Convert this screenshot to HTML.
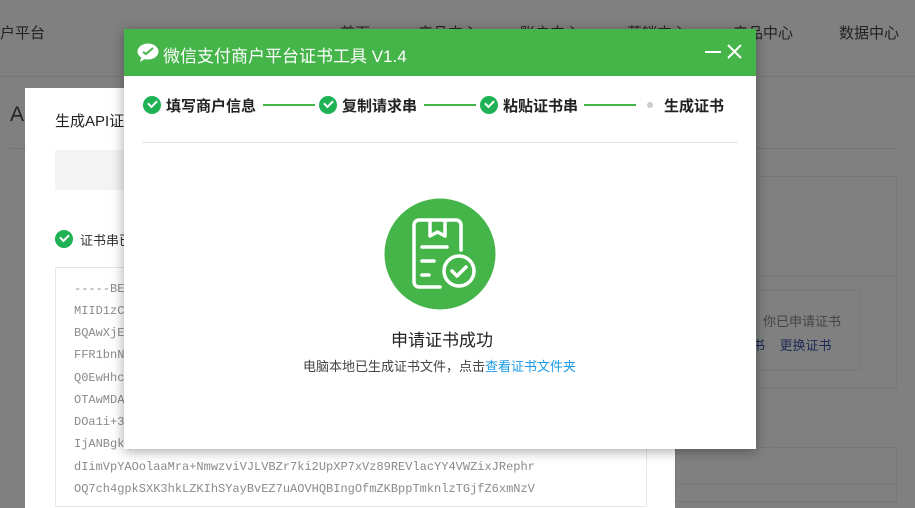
<!DOCTYPE html>
<html style="background:#808080"><head><meta charset="utf-8"><style>
*{margin:0;padding:0;box-sizing:border-box}
body{width:915px;height:500px;overflow:hidden;background:#808080;position:relative;font-family:"Liberation Sans","Noto Sans CJK SC",sans-serif}
.a{position:absolute;white-space:nowrap}
.nav{font-size:15px;color:#222;top:22px}
.code{font-family:"Liberation Mono",monospace;font-size:12px;color:#8a8a8a;left:74px}
.step{font-size:15px;color:#222;font-weight:bold;top:95px}
.ck{position:absolute;width:18px;height:18px;border-radius:50%;background:#1fb254;top:96px}
.ck:after{content:"";position:absolute;left:5px;top:4px;width:7px;height:4px;border-left:2px solid #fff;border-bottom:2px solid #fff;transform:rotate(-45deg)}
.ln{position:absolute;height:2px;background:#45b549;top:104px}
</style></head><body>
<div class="a" style="left:0;top:0;width:915px;height:500px;background:#808080"></div>
<div class="a nav" style="left:0">户平台</div>
<div class="a nav" style="left:340px">首页</div>
<div class="a nav" style="left:418px">产品中心</div>
<div class="a nav" style="left:520px">账户中心</div>
<div class="a nav" style="left:627px">营销中心</div>
<div class="a nav" style="left:733px">产品中心</div>
<div class="a nav" style="left:839px">数据中心</div>
<div class="a" style="left:0;top:76px;width:915px;height:1px;background:#777"></div>
<div class="a" style="left:10px;top:103px;font-size:21px;color:#222">AI</div>
<div class="a" style="left:10px;top:148px;width:887px;height:1px;background:#747474"></div>
<div class="a" style="left:675px;top:176px;width:222px;height:100px;border:1px solid #787878"></div>
<div class="a" style="left:675px;top:290px;width:186px;height:81px;border:1px solid #787878;border-radius:3px"></div>
<div class="a" style="left:675px;top:213px;width:222px;height:175px;border:1px solid #787878;border-top:none"></div>
<div class="a" style="left:763px;top:311px;font-size:13px;color:#444">你已申请证书</div>
<div class="a" style="left:752px;top:335px;font-size:13px;color:#1d2a55">书 &nbsp;&nbsp;&nbsp;更换证书</div>
<div class="a" style="left:675px;top:447px;width:222px;height:55px;border:1px solid #787878"></div>
<div class="a" style="left:675px;top:484px;width:222px;height:20px;border-top:1px solid #787878"></div>
<div class="a" style="left:25px;top:88px;width:650px;height:420px;background:#fff"></div>
<div class="a" style="left:55px;top:110px;font-size:15px;color:#222">生成API证</div>
<div class="a" style="left:55px;top:150px;width:600px;height:40px;background:#f3f3f3"></div>
<div class="ck" style="left:55px;top:230px"></div>
<div class="a" style="left:80px;top:230px;font-size:13px;color:#333">证书串已</div>
<div class="a" style="left:55px;top:267px;width:592px;height:240px;border:1px solid #e6e6e6"></div>
<div class="a code" style="top:282px">-----BEGIN</div>
<div class="a code" style="top:304px">MIID1zCCAr</div>
<div class="a code" style="top:326px">BQAwXjELMA</div>
<div class="a code" style="top:348px">FFR1bnNlbn</div>
<div class="a code" style="top:371px">Q0EwHhcNMT</div>
<div class="a code" style="top:393px">OTAwMDAxMT</div>
<div class="a code" style="top:415px">DOa1i+3kAl</div>
<div class="a code" style="top:437px">IjANBgkqhk</div>
<div class="a code" style="top:460px">dIimVpYAOolaaMra+NmwzviVJLVBZr7ki2UpXP7xVz89REVlacYY4VWZixJRephr</div>
<div class="a code" style="top:482px">OQ7ch4gpkSXK3hkLZKIhSYayBvEZ7uAOVHQBIngOfmZKBppTmknlzTGjfZ6xmNzV</div>
<div class="a" style="left:124px;top:29px;width:632px;height:420px;background:#fff;box-shadow:0 2px 12px rgba(0,0,0,.35)"></div>
<div class="a" style="left:124px;top:29px;width:632px;height:47px;background:#45b549"></div>
<svg class="a" style="left:137px;top:43px" width="22" height="19" viewBox="0 0 22 19"><ellipse cx="11" cy="8.5" rx="10.5" ry="8" fill="#fff"/><path d="M4 15 L3 19 L8 16Z" fill="#fff"/><path d="M6 9 L9 11 L16 5" stroke="#45b549" stroke-width="2" fill="none"/></svg>
<div class="a" style="left:163px;top:42px;font-size:17px;color:#fff">微信支付商户平台证书工具 V1.4</div>
<div class="a" style="left:705px;top:51px;width:16px;height:2px;background:#fff"></div>
<svg class="a" style="left:727px;top:44px" width="15" height="15"><path d="M1 1L14 14M14 1L1 14" stroke="#fff" stroke-width="2"/></svg>
<div class="ck" style="left:143px"></div><div class="a step" style="left:166px">填写商户信息</div>
<div class="ln" style="left:263px;width:52px"></div>
<div class="ck" style="left:319px"></div><div class="a step" style="left:342px">复制请求串</div>
<div class="ln" style="left:424px;width:52px"></div>
<div class="ck" style="left:480px"></div><div class="a step" style="left:503px">粘贴证书串</div>
<div class="ln" style="left:584px;width:52px"></div>
<div class="a" style="left:647px;top:102px;width:6px;height:6px;border-radius:50%;background:#ccc"></div>
<div class="a step" style="left:664px">生成证书</div>
<div class="a" style="left:142px;top:142px;width:596px;height:1px;background:#e2e2e2"></div>
<svg class="a" style="left:384px;top:198px" width="112" height="112" viewBox="0 0 112 112">
<circle cx="56" cy="56" r="55.5" fill="#45b549"/>
<g fill="none" stroke="#fff" stroke-width="3.5" stroke-linecap="round" stroke-linejoin="round">
<path d="M56 89 H35 a5 5 0 0 1 -5 -5 V27 a5 5 0 0 1 5 -5 H72 a5 5 0 0 1 5 5 V52"/>
<path d="M46 23 V38 L53.5 34 L61 38 V23"/>
<path d="M38 49 H63 M38 63 H50 M38 77 H45"/>
<circle cx="75" cy="73" r="15"/>
<path d="M68 73 L73 78 L82 69"/>
</g></svg>
<div class="a" style="left:391px;top:326px;font-size:17px;color:#222">申请证书成功</div>
<div class="a" style="left:303px;top:356px;font-size:13px;color:#444">电脑本地已生成证书文件，点击<span style="color:#1a9be6">查看证书文件夹</span></div>
</body></html>
